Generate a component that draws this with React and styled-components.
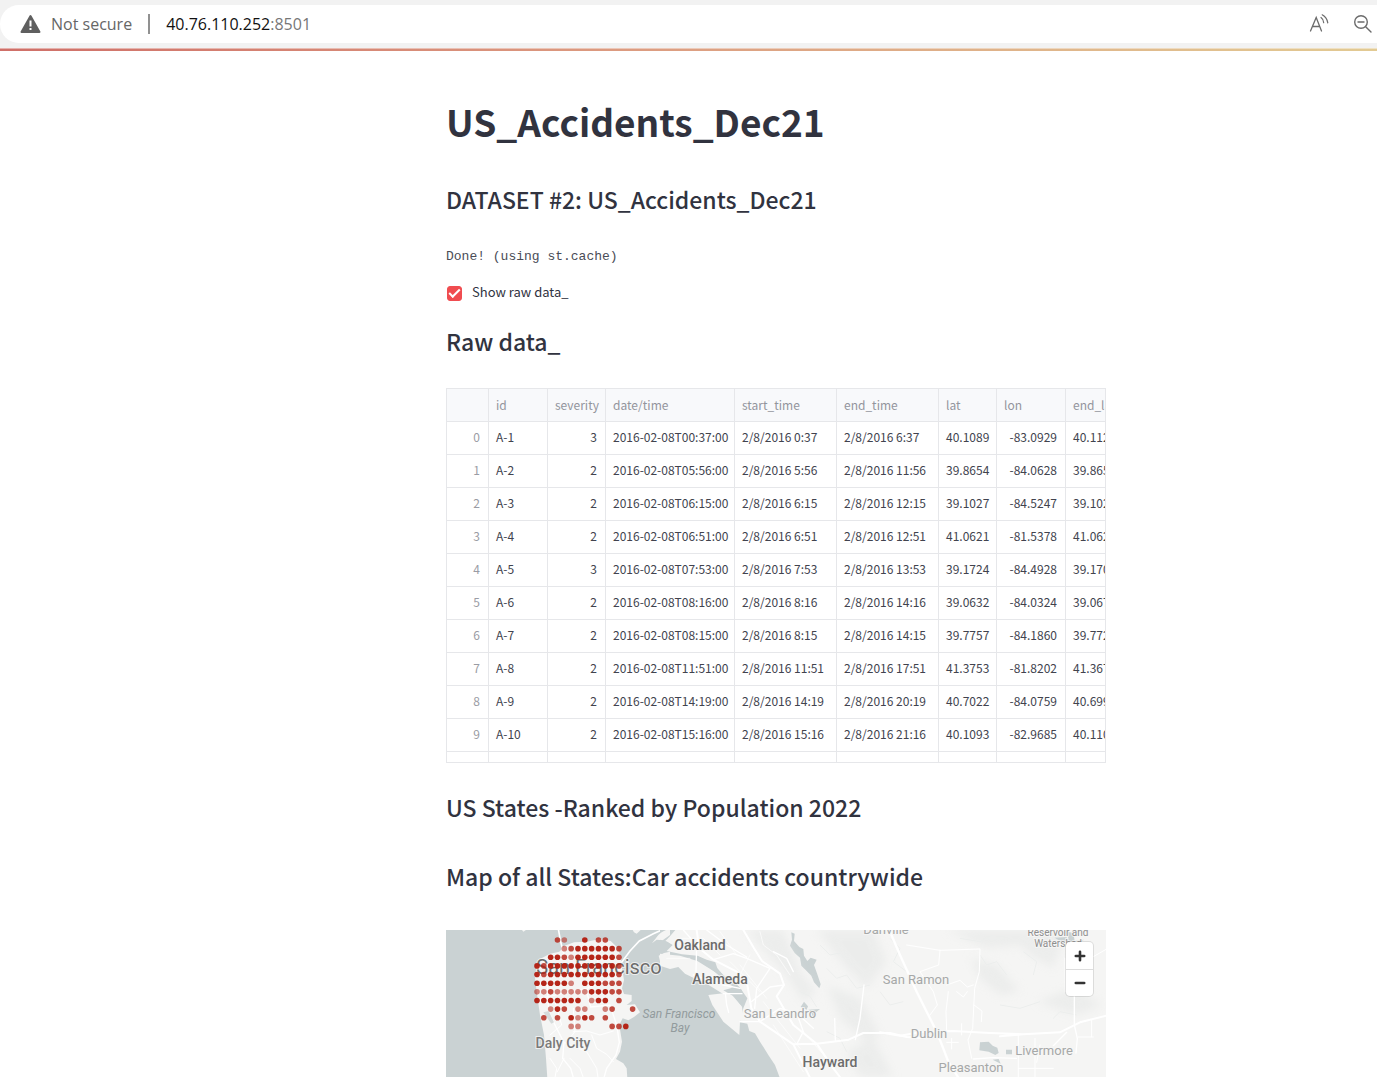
import React, { useState } from "react";
import styled, { createGlobalStyle } from "styled-components";

const GlobalStyle = createGlobalStyle`
  *, *::before, *::after { box-sizing: border-box; }
  body {
    margin: 0;
    background: #fff;
    color: #31333f;
    font-family: "Noto Sans CJK SC", "Noto Sans", sans-serif;
    overflow-x: hidden;
  }
`;

/* ---------- Browser bar ---------- */

const BrowserBar = styled.header`
  padding: 5px 0 5px 0;
  background: #f2f2f2;
`;

const AddressField = styled.div`
  display: flex;
  align-items: center;
  height: 38px;
  padding: 0 4px 0 20px;
  background: #fff;
  border-radius: 19px 0 0 19px;
  font-family: "Open Sans", "Noto Sans", sans-serif;
  font-size: 16px;
  line-height: 24px;
`;

const SecurityButton = styled.button`
  display: flex;
  align-items: center;
  gap: 10px;
  padding: 0;
  border: 0;
  background: none;
  color: #666;
  font: inherit;
`;

const Divider = styled.span`
  width: 2px;
  height: 20px;
  margin: 0 16px;
  background: #919191;
`;

const Address = styled.span`
  flex: 1;
  color: #111;
`;

const Port = styled.span`
  color: #777;
`;

const BarActions = styled.div`
  display: flex;
  gap: 24px;
`;

const IconButton = styled.button`
  display: flex;
  padding: 0;
  border: 0;
  background: none;
  color: #6b6b6b;
`;

const Decoration = styled.div`
  height: 3px;
  background: linear-gradient(90deg, #cf6f68, #dc9b80 45%, #e2ca93);
  border-top: 1px solid rgba(255, 255, 255, 0.45);
`;

/* ---------- Page ---------- */

const Page = styled.main`
  display: grid;
  grid-template-columns: 446fr 660fr 271fr;
`;

const Content = styled.div`
  grid-column: 2;
  min-width: 0;
  padding-top: 46px;
`;

const Title = styled.h1`
  margin: 0;
  font-size: 37px;
  font-weight: 700;
  line-height: 48px;
`;

const Heading = styled.h2`
  margin: ${(p) => p.$space}px 0 0;
  font-size: 23px;
  font-weight: 500;
  line-height: 32px;
`;

const Output = styled.div`
  margin-top: 32px;
  color: #4a4c56;
  font-family: "Liberation Mono", monospace;
  font-size: 13px;
  line-height: 20px;
`;

const CheckLabel = styled.label`
  display: flex;
  align-items: center;
  gap: 10px;
  width: fit-content;
  margin-top: 15px;
  padding-left: 1px;
  font-size: 13px;
  line-height: 20px;
`;

const CheckBox = styled.input`
  appearance: none;
  display: grid;
  place-items: center;
  width: 15px;
  height: 15px;
  margin: 2px 0 0;
  border: 1px solid #c9cad0;
  border-radius: 3px;
  background: #fff;

  &:checked {
    border-color: #f04c50;
    background: #f04c50;
  }

  &:checked::before {
    content: "";
    width: 11px;
    height: 6px;
    margin-bottom: 3px;
    border: solid #fff;
    border-width: 0 0 2px 2px;
    transform: rotate(-45deg);
  }
`;

/* ---------- Data frame ---------- */

const Frame = styled.div`
  height: 375px;
  margin-top: 31px;
  overflow: hidden;
  border: 1px solid #e6e7ea;
`;

const Grid = styled.table`
  width: 677px;
  table-layout: fixed;
  border-spacing: 0;
  font-size: 12px;
  line-height: 16px;
`;

const Col = styled.col`
  width: ${(p) => p.$w}px;
`;

const HeadCell = styled.th`
  height: 33px;
  padding: 0 7px;
  overflow: hidden;
  background: #f8f9fb;
  border: solid #e6e7ea;
  border-width: 0 1px 1px 0;
  color: #93959d;
  font-size: 12px;
  font-weight: 400;
  text-align: left;
  white-space: nowrap;
`;

const Cell = styled.td`
  height: 33px;
  padding: 0 8px 2px 7px;
  border: solid #e6e7ea;
  border-width: 0 1px 1px 0;
  color: #41434e;
  text-align: ${(p) => (p.$right ? "right" : "left")};
  white-space: nowrap;
`;

const IndexCell = styled(Cell).attrs({ as: "th", scope: "row" })`
  color: #9a9ca4;
  font-weight: 400;
`;

const columns = [
  ["", 42],
  ["id", 59],
  ["severity", 58],
  ["date/time", 129],
  ["start_time", 102],
  ["end_time", 102],
  ["lat", 58],
  ["lon", 69],
  ["end_lat", 58],
];

const rows = [
  ["A-1", 3, "2016-02-08T00:37:00", "2/8/2016 0:37", "2/8/2016 6:37", "40.1089", "-83.0929", "40.1121"],
  ["A-2", 2, "2016-02-08T05:56:00", "2/8/2016 5:56", "2/8/2016 11:56", "39.8654", "-84.0628", "39.8650"],
  ["A-3", 2, "2016-02-08T06:15:00", "2/8/2016 6:15", "2/8/2016 12:15", "39.1027", "-84.5247", "39.1021"],
  ["A-4", 2, "2016-02-08T06:51:00", "2/8/2016 6:51", "2/8/2016 12:51", "41.0621", "-81.5378", "41.0622"],
  ["A-5", 3, "2016-02-08T07:53:00", "2/8/2016 7:53", "2/8/2016 13:53", "39.1724", "-84.4928", "39.1705"],
  ["A-6", 2, "2016-02-08T08:16:00", "2/8/2016 8:16", "2/8/2016 14:16", "39.0632", "-84.0324", "39.0673"],
  ["A-7", 2, "2016-02-08T08:15:00", "2/8/2016 8:15", "2/8/2016 14:15", "39.7757", "-84.1860", "39.7727"],
  ["A-8", 2, "2016-02-08T11:51:00", "2/8/2016 11:51", "2/8/2016 17:51", "41.3753", "-81.8202", "41.3679"],
  ["A-9", 2, "2016-02-08T14:19:00", "2/8/2016 14:19", "2/8/2016 20:19", "40.7022", "-84.0759", "40.6991"],
  ["A-10", 2, "2016-02-08T15:16:00", "2/8/2016 15:16", "2/8/2016 21:16", "40.1093", "-82.9685", "40.1108"],
  ["A-11", 2, "2016-02-08T15:43:00", "2/8/2016 15:43", "2/8/2016 21:43", "39.1924", "-84.4772", "39.1965"],
];

const numeric = new Set([1, 5, 6, 7]);

function DataFrame() {
  return (
    <Frame>
      <Grid>
        <colgroup>
          {columns.map(([name, w]) => (
            <Col key={name} $w={w} />
          ))}
        </colgroup>
        <thead>
          <tr>
            {columns.map(([name]) => (
              <HeadCell key={name} scope="col">{name}</HeadCell>
            ))}
          </tr>
        </thead>
        <tbody>
          {rows.map((row, i) => (
            <tr key={row[0]}>
              <IndexCell $right>{i}</IndexCell>
              {row.map((value, c) => (
                <Cell key={c} $right={numeric.has(c)}>{value}</Cell>
              ))}
            </tr>
          ))}
        </tbody>
      </Grid>
    </Frame>
  );
}

/* ---------- Map ---------- */

const MapPanel = styled.section`
  position: relative;
  margin-top: 38px;
`;

const MapSvg = styled.svg`
  display: block;
  width: 100%;
  height: auto;
  background: #cad2d3;
`;

const Place = styled.text`
  font-family: Roboto, sans-serif;
  font-size: ${(p) => p.$size}px;
  font-weight: ${(p) => (p.$strong ? 500 : 400)};
  font-style: ${(p) => (p.$italic ? "italic" : "normal")};
  text-anchor: middle;
  fill: ${(p) => p.$color};
  stroke: ${(p) => (p.$italic ? "none" : "rgba(247, 247, 246, 0.8)")};
  stroke-width: 2px;
  paint-order: stroke;
`;

const ZoomGroup = styled.div`
  position: absolute;
  top: 12px;
  right: 13px;
  display: grid;
  width: 27px;
  background: #fff;
  border-radius: 4px;
  box-shadow: 0 0 0 1px rgba(0, 0, 0, 0.1);
`;

const ZoomButton = styled.button`
  display: grid;
  place-items: center;
  height: 27px;
  padding: 0;
  border: 0;
  background: none;
  color: #333;

  & + & {
    border-top: 1px solid #ddd;
  }
`;

const dotRows = [
  "...ml..D.mm",
  "....lmDDDDDDm",
  "..DDmlDDDDDDm",
  "DmDDDDDDDDDDm",
  "DmDDDDDDDDDDm",
  "DDDDDl.DDDmmm",
  "llmlllllDDDmm",
  "DDDDDDD.lDD.m",
  "..lDm.ll..lm..m",
  ".m.m.DlDm.m",
  ".....ll....mmD",
];
const dotOpacity = { D: 0.97, m: 0.8, l: 0.55 };

const strong = "#6c6c6c";
const mid = "#8f8f8f";
const soft = "#a6a8a8";

const places = [
  ["San Francisco", 153, 44, 20, strong, false],
  ["Daly City", 117, 118, 14, "#7a7a7a", true],
  ["Oakland", 254, 20, 14, strong, true],
  ["Alameda", 274, 54, 14, strong, true],
  ["San Leandro", 334, 88, 13, soft, false],
  ["Hayward", 384, 137, 14, strong, true],
  ["San Ramon", 470, 54, 13, soft, false],
  ["Dublin", 483, 108, 13, soft, false],
  ["Livermore", 598, 125, 13, soft, false],
  ["Pleasanton", 525, 142, 13, soft, false],
  ["Danville", 440, 4, 13, soft, false],
  ["Reservoir and", 612, 6, 10, mid, false],
  ["Watershed", 612, 17, 10, mid, false],
];

function AccidentMap() {
  return (
    <MapPanel aria-label="Map of car accidents">
      <MapSvg viewBox="0 0 660 147" role="img">
        <defs>
          <filter id="soft" x="-20%" y="-20%" width="140%" height="140%">
            <feGaussianBlur stdDeviation="14" />
          </filter>
        </defs>

        <g transform="scale(0.33333)">
          {/* San Francisco peninsula */}
          <g transform="translate(-18 -15)">
            <path
              fill="#f5f5f4"
              d="M300 102 330 86 358 80 374 62 402 52 440 50 480 42 512 48 530 65 542 92 546 130 552 165 546 190 552 207 575 210 575 228 560 240 585 238 600 262 582 276 565 286 548 280 538 300 546 350 540 380 528 402 550 415 560 430 562 460H322L318 400 312 330 300 270 290 200 284 150Z"
            />
            <path fill="#f5f5f4" d="M246 15H258L250 20ZM578 15H602L590 26 582 22ZM636 55 650 44 668 46 690 30V15H672L655 30ZM656 92 672 84 690 80V124L660 108Z" />
            <g fill="none" stroke="#fff" strokeWidth="4" strokeLinecap="round">
              <path d="M355 12 362 50 372 90M545 112 570 78 598 48 640 26 672 12" strokeWidth="5" />
              <path d="M322 180 326 260 350 310 372 352 368 400 392 430 400 458M440 200 452 246 510 240 530 300 538 352 528 390 500 430 492 458" />
              <path d="M330 400 350 430 345 458M372 400 352 440M400 320 440 318 480 330 520 318M455 330 470 370 500 388 520 410M372 352 440 380 470 430 474 458M345 230 365 300 330 330M400 250 405 320 380 350M390 400 420 430 430 458M480 60 470 130 440 200M300 220 440 190 540 150" strokeWidth="3" />
            </g>
            <path fill="#d6dbdb" d="M310 262 326 258 342 292 334 296Z" />
          </g>

          {/* East Bay mainland */}
          <g transform="translate(642 -15)">
            <path
              fill="#f5f5f4"
              d="M46 15 30 34 16 48 38 60 20 78 66 88 112 92 160 118 190 150 238 186 262 220 250 250 240 292 262 296 268 318 285 325 300 350 325 390 345 420 360 460H1400V0H50Z"
            />
            <path fill="#f5f5f4" d="M0 86 60 92 112 108 164 140 206 178 232 190 206 204 188 206 140 176 95 156 75 146 55 126 30 132 0 122Z" />
            <path fill="#f5f5f4" d="M145 210 190 205 218 208 246 245 250 275 240 290 238 330 190 290 157 240Z" />
            <g fill="#cad2d3">
              <path d="M112 92 140 104 166 112 172 130 190 152 172 146 150 130 120 108Z" />
              <path d="M190 196 212 190 228 176 246 196 250 220 242 240 218 212Z" />
              <path d="M0 15H18L0 24ZM0 44 22 50 36 60 14 74 0 78Z" />
              <path d="M394 22 404 26 402 48 418 66 430 72 432 92 442 108 452 98 470 104 462 120 472 148 482 178 478 190 462 172 454 152 440 138 424 122 420 98 404 84 390 62 396 44Z" />
              <path d="M422 246 432 230 444 244 440 254ZM446 254 480 252 468 262 462 284 456 268Z" />
            </g>

            {/* hill shading */}
            <g filter="url(#soft)" fill="#e3e5e4" opacity="0.5">
              <path d="M260 15H370L420 140 470 200 430 230 380 150 300 60Z" />
              <path d="M470 15H640L680 110 620 190 560 130Z" />
              <path d="M500 180 600 220 660 330 620 350 540 280Z" />
              <path d="M560 380 640 340 700 456H600Z" />
              <path d="M860 15H1060L1100 60 980 70Z" />
              <path d="M930 100 1010 120 1080 200 1020 210 960 160Z" />
              <path d="M1130 230 1240 190 1330 240 1250 270Z" />
              <path d="M1040 15H1220L1180 130 1110 90Z" />
            </g>
            <g fill="none" stroke="#eceeed" strokeWidth="3">
              <path d="M480 60 510 90 540 84 570 120 600 110M500 130 530 160 560 150 590 190 630 180M530 220 556 236 580 226 600 260M420 200 450 214 470 246M560 40 600 60 620 40M500 320 540 340 560 380M600 400 620 420 640 400 670 440M960 90 980 120 1010 110 1040 150M900 40 960 50 1000 30M1090 80 1130 110 1120 150M1180 280 1200 260 1250 270" />
              <path d="M690 40 720 70 700 110 740 140M660 200 690 240 730 230M1020 240 1080 250 1140 230" />
            </g>

            <g fill="none" stroke="#fff" strokeLinejoin="round" strokeLinecap="round">
              <path
                strokeWidth="6"
                d="M110 15 118 70 160 104 230 140 262 180 274 250 300 290 400 358 450 458M250 15 282 70 306 108 360 146 372 180 350 214 400 300 470 356 520 430 540 456M400 358 470 356 566 344 610 324 690 324 740 336 800 340"
              />
              <path
                strokeWidth="4"
                d="M70 15 110 60 108 140M160 104 220 86 260 100 330 130M140 15 200 60 260 96M100 150 190 180 240 190M196 204 200 240 206 262M190 206 246 206M274 230 330 186 372 180M300 290 360 250 410 264 460 310M330 130 290 190 284 250M340 80 380 100 400 140M410 264 430 320 410 358M524 280 526 346M586 344 600 280 612 180M240 290 262 290 300 290"
              />
              <path strokeWidth="2" d="M50 40 130 40 180 90M20 100 90 100M210 110 300 200M240 120 320 220M270 90 240 150M180 20 230 90M300 20 310 60 350 90 390 150M310 230 420 370M340 300 430 440M430 320 500 400" />
            </g>
          </g>

          {/* Tri-Valley */}
          <g transform="translate(1302 -15)">
            <g fill="none" stroke="#fff" strokeLinejoin="round" strokeLinecap="round">
              <path strokeWidth="7" d="M28 15 60 90 110 200 160 300 180 345 205 410 235 458" />
              <path strokeWidth="6" d="M0 322 60 332 120 322 220 318 330 324 430 328 540 322 600 292 680 272M430 328 360 334" />
              <path strokeWidth="4" d="M520 362 560 322M410 400 340 398 280 402M583 210V300L592 340 588 384" />
              <path strokeWidth="3" d="M80 60 180 76 300 72 298 140 284 190 278 310 264 345 275 400M180 76 176 120 120 140 160 200 172 240 150 270M205 200 198 260 200 318M200 180 240 166 262 186 280 180M230 200 250 216 262 200M415 330V456M465 340V456M415 430H520M470 412 480 360M595 336H640M635 284V336M555 100 556 200M640 95 680 72M245 296V330M200 352H235M215 340V372M282 240 306 258 304 290" />
            </g>
            <g fill="#cad2d3">
              <path d="M300 352 326 350 338 362 352 368 356 384 346 390 326 380 298 376Z" />
              <path d="M378 374H396V388H378ZM338 404 356 402 362 416Z" />
              <path d="M524 38 560 36 562 50 540 48ZM562 20 580 24 584 48 612 44 590 56 566 50Z" />
            </g>
          </g>
        </g>

        {places.map(([name, x, y, size, color, isStrong]) => (
          <Place key={name} x={x} y={y} $size={size} $color={color} $strong={isStrong}>{name}</Place>
        ))}
        <Place x="233" y="88" $size={12} $color="#929b9d" $italic>San Francisco</Place>
        <Place x="234" y="102" $size={12} $color="#929b9d" $italic>Bay</Place>

        <g fill="#b31f12">
          {dotRows.flatMap((row, r) =>
            [...row].map((mark, c) =>
              mark === "." ? null : (
                <circle key={`${r}-${c}`} cx={91 + c * 6.83} cy={10 + r * 8.64} r="2.8" opacity={dotOpacity[mark]} />
              )
            )
          )}
        </g>
      </MapSvg>
      <ZoomGroup>
        <ZoomButton type="button" aria-label="Zoom in">
          <svg width="12" height="12" viewBox="0 0 12 12" stroke="currentColor" strokeWidth="2.6" strokeLinecap="round">
            <path d="M6 1.8v8.4M1.8 6h8.4" />
          </svg>
        </ZoomButton>
        <ZoomButton type="button" aria-label="Zoom out">
          <svg width="12" height="12" viewBox="0 0 12 12" stroke="currentColor" strokeWidth="2.6" strokeLinecap="round">
            <path d="M1.8 6h8.4" />
          </svg>
        </ZoomButton>
      </ZoomGroup>
    </MapPanel>
  );
}

/* ---------- App ---------- */

export default function App() {
  const [showRaw, setShowRaw] = useState(true);
  return (
    <>
      <GlobalStyle />
      <BrowserBar>
        <AddressField>
          <SecurityButton type="button">
            <svg width="21" height="20" viewBox="0 0 21 20" aria-hidden="true">
              <path fill="#5f5f5f" stroke="#5f5f5f" strokeWidth="2" strokeLinejoin="round" d="M10.500 2 19.500 18H1.500Z" />
              <path stroke="#fff" strokeWidth="2" d="M10.500 6.500v6M10.500 14v2" />
            </svg>
            Not secure
          </SecurityButton>
          <Divider />
          <Address>40.76.110.252<Port>:8501</Port></Address>
          <BarActions>
            <IconButton type="button" aria-label="Read aloud">
              <svg width="20" height="20" viewBox="0 0 20 20" fill="none" stroke="currentColor" strokeWidth="1.300" strokeLinecap="round">
                <path d="M1.500 17 7.200 3.500 12.500 17M3.600 12.500h7.200" />
                <path d="M12 3.500q2.600 1.800 2.700 5.200M13.200 0.800q4.800 2.700 5.600 8" strokeWidth="1.200" />
              </svg>
            </IconButton>
            <IconButton type="button" aria-label="Zoom out page">
              <svg width="20" height="20" viewBox="0 0 20 20" fill="none" stroke="currentColor" strokeWidth="1.400" strokeLinecap="round">
                <circle cx="8" cy="8" r="6.300" />
                <path d="M12.700 12.700 18 18M5 8h6" />
              </svg>
            </IconButton>
          </BarActions>
        </AddressField>
      </BrowserBar>
      <Decoration />
      <Page>
        <Content>
          <Title>US_Accidents_Dec21</Title>
          <Heading $space={38}>DATASET #2: US_Accidents_Dec21</Heading>
          <Output>Done! (using st.cache)</Output>
          <CheckLabel>
            <CheckBox type="checkbox" checked={showRaw} onChange={(e) => setShowRaw(e.target.checked)} />
            Show raw data_
          </CheckLabel>
          {showRaw && (
            <>
              <Heading $space={23}>Raw data_</Heading>
              <DataFrame />
            </>
          )}
          <Heading $space={28}>US States -Ranked by Population 2022</Heading>
          <Heading $space={37}>Map of all States:Car accidents countrywide</Heading>
          <AccidentMap />
        </Content>
      </Page>
    </>
  );
}
